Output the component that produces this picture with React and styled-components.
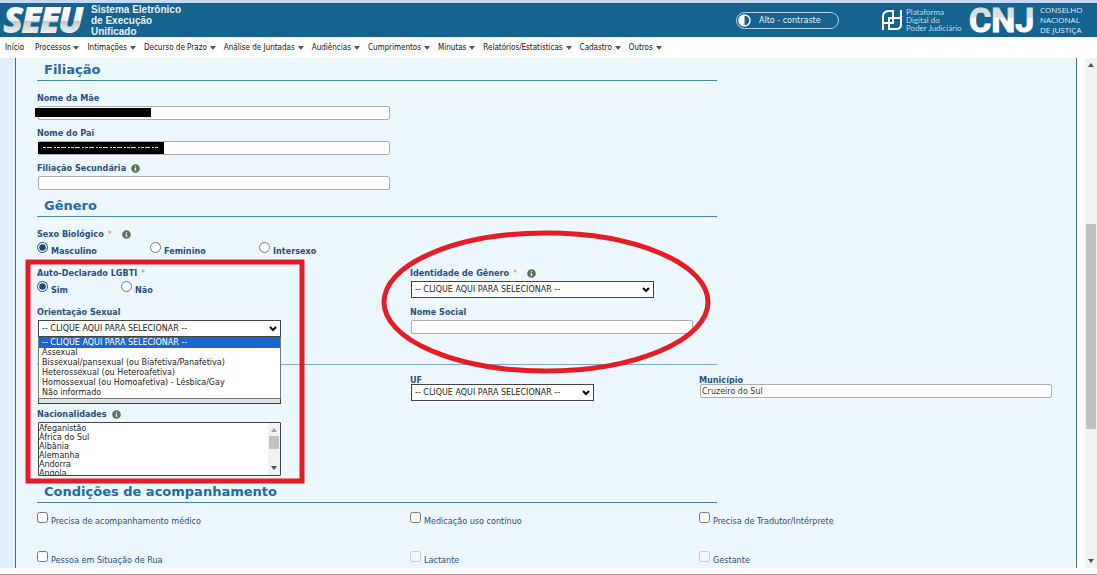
import React from 'react';
import styled, { createGlobalStyle } from 'styled-components';
import { FaInfoCircle } from 'react-icons/fa';

const GlobalStyle = createGlobalStyle`
  * {
    box-sizing: border-box;
  }

  body {
    margin: 0;
    background: #fff;
    color: #2b4f7c;
    font-family: 'DejaVu Sans Condensed', Verdana, sans-serif;
    font-size: 9px;
  }
`

const Page = styled.div`
  display: flex;
  flex-direction: column;
  height: 100vh;
  overflow: hidden;
  border-top: 3px solid #c5d9f6;
  border-bottom: 1px solid #989898;
`

const Header = styled.header`
  display: flex;
  align-items: center;
  flex: none;
  height: 34px;
  padding: 0 15px 0 3px;
  background: #17638f;
  color: #fff;
`

const Logo = styled.svg`
  flex: none;
  height: 34px;
  overflow: visible;
`

const SystemName = styled.div`
  margin: 0 auto 0 2px;
  color: #e6f1f8;
  font: bold 10px/11px 'Liberation Sans', Arial, sans-serif;
`

const ContrastButton = styled.button`
  display: flex;
  align-items: center;
  gap: 8px;
  width: 103px;
  height: 17px;
  margin-right: 42px;
  padding: 0 1px;
  border: 1px solid #b5d3e4;
  border-radius: 9px;
  background: transparent;
  color: #e3eff6;
  font: 8px 'DejaVu Sans', sans-serif;
`

const PlatformText = styled.div`
  width: 62px;
  margin-left: 3px;
  color: #c3dae7;
  font: 8px/8px Lato, sans-serif;
  white-space: nowrap;
`

const CouncilText = styled.div`
  width: 42px;
  margin-left: 4px;
  color: #e3eff6;
  font: 8px/10px 'Open Sans', sans-serif;
  white-space: nowrap;
`

const Menu = styled.nav`
  display: flex;
  align-items: center;
  flex: none;
  gap: 8px;
  height: 21px;
  padding: 0 5px;
`

const MenuLink = styled.a`
  display: flex;
  align-items: center;
  gap: 3px;
  color: #111;
  font: 8px 'DejaVu Sans Condensed', Tahoma, sans-serif;
  text-decoration: none;
  white-space: nowrap;

  &:first-child {
    margin-right: 3px;
  }
`

const Caret = styled.span`
  border: 3px solid transparent;
  border-top: 4px solid #555;
  border-bottom: 0;
`

const Body = styled.div`
  display: flex;
  flex: 1;
  min-height: 0;
  margin-bottom: 6px;
`

const Gutter = styled.div`
  width: 15px;
  background: #e3f0fb;
`

const Panel = styled.main`
  position: relative;
  flex: 1;
  overflow: hidden;
  padding: 0 9px 0 21px;
  border: solid #3f6f96;
  border-width: 0 1px;
  background: #ecf8fe;
`

const SectionTitle = styled.h2`
  width: 66%;
  height: 23px;
  margin: 4px 0 9px;
  padding-left: 7px;
  border-bottom: 1px solid #4883ad;
  color: #1f6ba3;
  font: bold 13px/24px 'DejaVu Sans', Verdana, sans-serif;

  &:first-child {
    margin-top: 0;
  }
`

const Divider = styled.hr`
  width: 66%;
  height: 1px;
  margin: 27px 0 7px;
  border: 0;
  background: #7ba8cb;
`

const Grid = styled.div`
  display: grid;
  grid-template-columns: 373fr 289fr 368fr;
  row-gap: ${props => props.$gap || 6}px;
  padding-top: ${props => props.$inset || 0}px;
`

const Field = styled.div`
  grid-column: ${props => props.$column || 1};
  min-height: ${props => props.$tall ? 32 : 29}px;
  padding-top: ${props => props.$tight ? 3 : 0}px;
`

const Label = styled.label`
  display: flex;
  align-items: center;
  height: ${props => props.$tight ? 9 : 14}px;
  margin-bottom: ${props => props.$tight ? 0 : 1}px;
  color: #2b4f7c;
  font-weight: bold;
`

const Required = styled.span`
  margin: 0 5px 0 4px;
  color: #e8825a;
  font-weight: normal;
`

const InfoIcon = styled(FaInfoCircle)`
  width: 9px;
  height: 9px;
  margin-left: 5px;
  color: #5b7259;
`

const InputBox = styled.div`
  position: relative;
  width: ${props => props.$width || 352}px;
  margin-left: 1px;
`

const Input = styled.input`
  display: block;
  width: 100%;
  height: 14px;
  padding: 0 1px;
  border: 1px solid #a9adb0;
  border-radius: 2px;
  background: #fff;
  color: #333;
  font: 8px 'DejaVu Sans', sans-serif;
`

const Redaction = styled.div`
  position: absolute;
  top: ${props => props.$top}px;
  left: ${props => props.$left}px;
  width: ${props => props.$width}px;
  height: ${props => props.$height}px;
  background: #000;
`

const Select = styled.select`
  display: block;
  appearance: none;
  width: 100%;
  height: 17px;
  padding: 0 3px;
  border: 1px solid #444;
  border-radius: 0;
  background: ${props => props.disabled ? '#e2e5e7' : '#fff'};
  color: #222;
  font: 8px 'DejaVu Sans', sans-serif;
  opacity: 1;
`

const Chevron = styled.svg`
  position: absolute;
  top: 6px;
  right: 4px;
  width: 8px;
  height: 6px;
  fill: none;
  stroke: #000;
  stroke-width: 2;
  pointer-events: none;
`

const Options = styled.ul`
  position: absolute;
  z-index: 1;
  top: 17px;
  left: 0;
  width: 100%;
  margin: 0;
  padding: 0;
  border: 1px solid #777;
  border-top: 0;
  background: #fff;
  list-style: none;
`

const Option = styled.li`
  height: ${props => props.$active ? 11 : 10}px;
  padding-left: 3px;
  background: ${props => props.$active ? '#1b67cf' : 'transparent'};
  color: ${props => props.$active ? '#fff' : '#222'};
  font: 8px/${props => props.$active ? 11 : 10}px 'DejaVu Sans', sans-serif;
  white-space: nowrap;
`

const ListBox = styled.select`
  display: block;
  width: 100%;
  height: 54px;
  padding: 1px 0 0;
  border: 1px solid #444;
  border-radius: 1px;
  background: #fff;
  color: #222;
  font: 8px 'DejaVu Sans', sans-serif;

  option {
    height: 9px;
    min-height: 9px;
    padding: 0;
    line-height: 9px;
  }
`

const ListScrollbar = styled.div`
  position: absolute;
  top: 1px;
  right: 1px;
  bottom: 1px;
  display: flex;
  flex-direction: column;
  align-items: center;
  gap: 4px;
  width: 12px;
  padding: 5px 0;
  background: #f1f1f1;
`

const ListThumb = styled.div`
  width: 10px;
  height: 13px;
  margin-bottom: auto;
  background: #c1c1c1;
`

const RadioRow = styled.div`
  display: flex;
`

const Choice = styled.label`
  display: flex;
  align-items: flex-start;
  width: ${props => props.$width ? props.$width + 'px' : 'auto'};
  height: 15px;
  font-weight: ${props => props.$bold ? 'bold' : 'normal'};
  line-height: 11px;
  white-space: nowrap;

  input {
    width: 11px;
    height: 11px;
    margin: 0 3px 0 0;
    accent-color: #1c4a7c;
  }

  span {
    padding-top: 4px;
  }
`

const Scrollbar = styled.div`
  display: flex;
  flex-direction: column;
  align-items: center;
  width: 12px;
  margin-left: 8px;
  padding: 5px 0;
  background: #f1f1f1;
`

const ScrollArrow = styled.span`
  border: 3px solid transparent;
  border-top: ${props => props.$down ? '4px solid #505050' : '0'};
  border-bottom: ${props => props.$down ? '0' : '4px solid'};
  border-bottom-color: ${props => props.$muted ? '#a3a3a3' : '#505050'};
`

const ScrollTrack = styled.div`
  flex: 1;
  display: flex;
  flex-direction: column;
  width: 10px;

  &::before {
    content: '';
    flex: 157;
  }

  &::after {
    content: '';
    flex: 130;
  }
`

const ScrollThumb = styled.div`
  flex: 205;
  background: #c1c1c1;
`

const Marks = styled.svg`
  position: absolute;
  z-index: 2;
  top: 0;
  left: 0;
  width: 720px;
  height: 440px;
  fill: none;
  stroke: #e71d25;
  stroke-width: 5;
  pointer-events: none;
`

const PLACEHOLDER = '-- CLIQUE AQUI PARA SELECIONAR --';

const menuItems = [
  'Processos',
  'Intimações',
  'Decurso de Prazo',
  'Análise de Juntadas',
  'Audiências',
  'Cumprimentos',
  'Minutas',
  'Relatórios/Estatísticas',
  'Cadastro',
  'Outros',
];

const orientations = [
  'Assexual',
  'Bissexual/pansexual (ou Biafetiva/Panafetiva)',
  'Heterossexual (ou Heteroafetiva)',
  'Homossexual (ou Homoafetiva) - Lésbica/Gay',
  'Não informado',
];

const countries = ['Afeganistão', 'África do Sul', 'Albânia', 'Alemanha', 'Andorra', 'Angola'];

const conditions = [
  { text: 'Precisa de acompanhamento médico' },
  { text: 'Medicação uso contínuo' },
  { text: 'Precisa de Tradutor/Intérprete' },
  { text: 'Pessoa em Situação de Rua' },
  { text: 'Lactante', disabled: true },
  { text: 'Gestante', disabled: true },
];

const SeeuLogo = () => (
  <Logo width="86" viewBox="0 0 86 34" role="img" aria-label="SEEU">
    <defs>
      <linearGradient id="metal" x1="0" y1="4" x2="0" y2="31" gradientUnits="userSpaceOnUse">
        <stop offset="0" stopColor="#fff" />
        <stop offset="0.5" stopColor="#ededed" />
        <stop offset="0.52" stopColor="#c4c8ca" />
        <stop offset="1" stopColor="#f2f2f2" />
      </linearGradient>
    </defs>
    <text
      x="1" y="29" fill="url(#metal)" stroke="url(#metal)" strokeWidth="2"
      fontFamily="'Open Sans', 'Noto Sans', sans-serif" fontSize="34"
      fontWeight="bold" fontStyle="italic"
    >SEEU</text>
  </Logo>
)

const PlatformIcon = () => (
  <svg width="22" height="22" viewBox="0 0 22 22" fill="none" stroke="#fff" strokeWidth="2">
    <path d="M2 21V8Q2 2 8 2H12V14H2" />
    <path d="M20 1V15Q20 20 15 20H8V9H20" />
  </svg>
)

const CnjLogo = () => (
  <Logo width="68" viewBox="0 0 68 34" role="img" aria-label="CNJ">
    <defs>
      <linearGradient id="silver" x1="0" y1="4" x2="0" y2="30" gradientUnits="userSpaceOnUse">
        <stop offset="0" stopColor="#d3dade" />
        <stop offset="0.4" stopColor="#dde3e6" />
        <stop offset="0.42" stopColor="#fff" />
      </linearGradient>
    </defs>
    <text
      x="1" y="29" fill="url(#silver)" stroke="url(#silver)" strokeWidth="1"
      fontFamily="Roboto, sans-serif" fontSize="34" fontWeight="bold"
    >CNJ</text>
  </Logo>
)

const SelectField = ({ id, width, children }) => (
  <InputBox $width={width}>
    <Select id={id}>
      <option>{PLACEHOLDER}</option>
    </Select>
    <Chevron viewBox="0 0 8 6">
      <path d="M1 1l3 3 3-3" />
    </Chevron>
    {children}
  </InputBox>
)

const Radio = ({ name, text, width, checked }) => (
  <Choice $bold $width={width}>
    <input type="radio" name={name} defaultChecked={checked} />
    <span>{text}</span>
  </Choice>
)

const App = () => (
  <Page>
    <GlobalStyle />
    <Header>
      <SeeuLogo />
      <SystemName>
        Sistema Eletrônico<br />de Execução<br />Unificado
      </SystemName>
      <ContrastButton type="button">
        <svg width="13" height="13" viewBox="0 0 13 13">
          <circle cx="6.5" cy="6.5" r="5.5" fill="none" stroke="#fff" strokeWidth="1.4" />
          <path d="M6.5 1a5.5 5.5 0 0 0 0 11z" fill="#fff" />
        </svg>
        Alto - contraste
      </ContrastButton>
      <PlatformIcon />
      <PlatformText>
        Plataforma<br />Digital do<br />Poder Judiciário
      </PlatformText>
      <CnjLogo />
      <CouncilText>
        CONSELHO<br />NACIONAL<br />DE JUSTIÇA
      </CouncilText>
    </Header>

    <Menu>
      <MenuLink href="#">Início</MenuLink>
      {menuItems.map(item => (
        <MenuLink href="#" key={item}>{item}<Caret /></MenuLink>
      ))}
    </Menu>

    <Body>
      <Gutter />
      <Panel>
        <SectionTitle>Filiação</SectionTitle>
        <Grid $inset={1}>
          <Field>
            <Label htmlFor="mae">Nome da Mãe</Label>
            <InputBox>
              <Input id="mae" />
              <Redaction $top={2} $left={-3} $width={116} $height={9} />
            </InputBox>
          </Field>
          <Field>
            <Label htmlFor="pai">Nome do Pai</Label>
            <InputBox>
              <Input id="pai" />
              <Redaction $top={1} $left={0} $width={126} $height={12}>
                <svg width="126" height="12">
                  <path d="M5 5.5H120" stroke="#ddd" strokeDasharray="3 1 5 2 2 1" />
                </svg>
              </Redaction>
            </InputBox>
          </Field>
          <Field>
            <Label htmlFor="filiacao">Filiação Secundária <InfoIcon /></Label>
            <InputBox>
              <Input id="filiacao" />
            </InputBox>
          </Field>
        </Grid>

        <SectionTitle>Gênero</SectionTitle>
        <Grid $gap={7} $inset={1}>
          <Field $tall>
            <Label as="div">Sexo Biológico<Required>*</Required><InfoIcon /></Label>
            <RadioRow>
              <Radio name="sexo" text="Masculino" width={113} checked />
              <Radio name="sexo" text="Feminino" width={109} />
              <Radio name="sexo" text="Intersexo" />
            </RadioRow>
          </Field>
          <Field $tall>
            <Label as="div">Auto-Declarado LGBTI<Required>*</Required></Label>
            <RadioRow>
              <Radio name="lgbti" text="Sim" width={84} checked />
              <Radio name="lgbti" text="Não" />
            </RadioRow>
          </Field>
          <Field $tall $column={2}>
            <Label htmlFor="identidade">Identidade de Gênero<Required>*</Required><InfoIcon /></Label>
            <SelectField id="identidade" width={243} />
          </Field>
          <Field $tall>
            <Label htmlFor="orientacao">Orientação Sexual</Label>
            <SelectField id="orientacao" width={243}>
              <Options role="listbox">
                <Option role="option" aria-selected $active>{PLACEHOLDER}</Option>
                {orientations.map(item => (
                  <Option role="option" key={item}>{item}</Option>
                ))}
              </Options>
            </SelectField>
          </Field>
          <Field $tall $column={2}>
            <Label htmlFor="social">Nome Social</Label>
            <InputBox $width={282}>
              <Input id="social" />
            </InputBox>
          </Field>
        </Grid>

        <Divider />
        <Grid $gap={3}>
          <Field>
            <Label />
            <InputBox $width={243}>
              <Select disabled aria-label="País" />
            </InputBox>
          </Field>
          <Field $tight $column={2}>
            <Label $tight htmlFor="uf">UF</Label>
            <SelectField id="uf" width={183} />
          </Field>
          <Field $tight $column={3}>
            <Label $tight htmlFor="municipio">Município</Label>
            <InputBox>
              <Input id="municipio" defaultValue="Cruzeiro do Sul" />
            </InputBox>
          </Field>
          <Field>
            <Label htmlFor="nacionalidades">Nacionalidades <InfoIcon /></Label>
            <InputBox $width={243}>
              <ListBox id="nacionalidades" multiple>
                {countries.map(item => <option key={item}>{item}</option>)}
              </ListBox>
              <ListScrollbar>
                <ScrollArrow $muted />
                <ListThumb />
                <ScrollArrow $down />
              </ListScrollbar>
            </InputBox>
          </Field>
        </Grid>

        <SectionTitle>Condições de acompanhamento</SectionTitle>
        <Grid $gap={24}>
          {conditions.map(item => (
            <Choice key={item.text}>
              <input type="checkbox" disabled={item.disabled} />
              <span>{item.text}</span>
            </Choice>
          ))}
        </Grid>

        <Marks>
          <rect x="12" y="204" width="274" height="219" />
          <ellipse cx="530" cy="244" rx="162" ry="69" />
        </Marks>
      </Panel>
      <Scrollbar>
        <ScrollArrow />
        <ScrollTrack>
          <ScrollThumb />
        </ScrollTrack>
        <ScrollArrow $down />
      </Scrollbar>
    </Body>
  </Page>
);

export default App;
